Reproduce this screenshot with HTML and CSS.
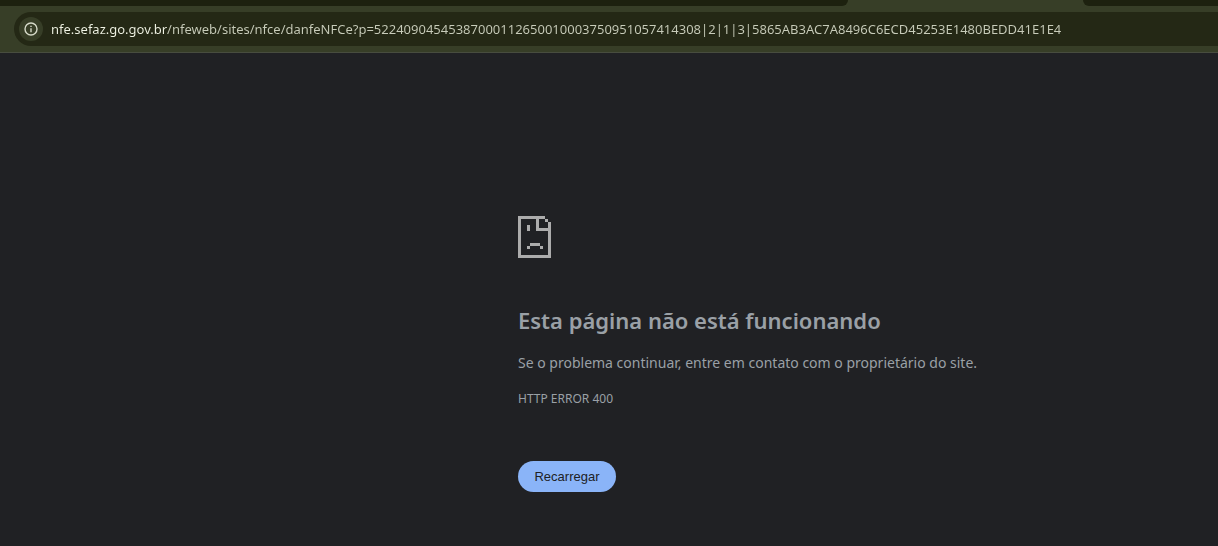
FILE: index.html
```html
<!DOCTYPE html>
<html lang="pt-BR">
<head>
    <meta charset="UTF-8">
    <meta name="viewport" content="width=device-width, initial-scale=1.0">
    <title>nfe.sefaz.go.gov.br</title>
    <link rel="stylesheet" href="styles.css">
</head>
<body>
    <header class="browser">
        <div class="tab-strip">
            <div class="tab-left"></div>
            <div class="tab-active"></div>
            <div class="tab-right"></div>
        </div>
        <div class="toolbar">
            <form class="address-bar">
                <button type="button" class="site-info" aria-label="Ver informações do site">
                    <svg width="14" height="14" viewBox="0 0 14 14">
                        <circle cx="7" cy="7" r="6" fill="none" stroke="#d5d9c8" stroke-width="1.4"/>
                        <path d="M6.3 6.3h1.4v4H6.3zM6.3 3.7h1.4v1.4H6.3z" fill="#d5d9c8"/>
                    </svg>
                </button>
                <input type="text" class="url" aria-label="Barra de endereço" spellcheck="false" value="nfe.sefaz.go.gov.br/nfeweb/sites/nfce/danfeNFCe?p=52240904545387000112650010003750951057414308|2|1|3|5865AB3AC7A8496C6ECD45253E1480BEDD41E1E4">
            </form>
        </div>
    </header>
    <main class="error-page">
        <svg class="sad-file" width="33" height="42" viewBox="0 0 33 42" shape-rendering="crispEdges">
            <path fill="#acacac" d="M0 0h27v3H21v9h12v3H18V3H3v36h27V15h3v27H0zM27 3h3v3h-3zM30 6h3v9h-3zM9 9h3v6H9zM12 27h10v3H12zM9 30h3v3H9zM22 30h3v3h-3z"/>
        </svg>
        <h1>Esta página não está funcionando</h1>
        <p class="message">Se o problema continuar, entre em contato com o proprietário do site.</p>
        <p class="error-code">HTTP ERROR 400</p>
        <button type="button" class="reload">Recarregar</button>
    </main>
</body>
</html>
```
FILE: styles.css
```css
* {
    box-sizing: border-box;
}

body {
    margin: 0;
    background-color: #202124;
    color: #9aa0a6;
    font-family: "Noto Sans", "Open Sans", sans-serif;
}

/* browser bars */
.browser {
    background-color: #373e27;
    border-bottom: 1px solid #484d3f;
}

.tab-strip {
    display: flex;
    height: 6px;
}

.tab-left,
.tab-right {
    background-color: #1d210f;
}

.tab-left {
    flex: 848;
    border-bottom-right-radius: 8px;
}

.tab-active {
    flex: 235;
}

.tab-right {
    flex: 135;
    border-bottom-left-radius: 8px;
}

.toolbar {
    padding: 6px 0 6px 14px;
}

.address-bar {
    display: flex;
    align-items: center;
    gap: 8px;
    height: 34px;
    padding-left: 5px;
    background-color: #242815;
    border-radius: 17px 0 0 17px;
}

.site-info {
    display: flex;
    align-items: center;
    justify-content: center;
    width: 24px;
    height: 24px;
    padding: 0;
    border: none;
    border-radius: 50%;
    background-color: #373e27;
}

.url {
    flex: 1;
    height: 24px;
    padding: 0;
    border: none;
    outline: none;
    color: #c8ccba;
    /* the host name is brighter than the rest of the address */
    background: linear-gradient(to right, #f0f3e4 116px, #c8ccba 116px);
    -webkit-background-clip: text;
    background-clip: text;
    -webkit-text-fill-color: transparent;
    font-family: inherit;
    font-size: 13px;
}

/* error page */
.error-page {
    width: 100%;
    max-width: 700px;
    margin-left: auto;
    padding-top: 163px;
}

.sad-file {
    display: block;
}

h1 {
    margin: 46px 0 16px;
    font-size: 22px;
    font-weight: 600;
    line-height: 32px;
}

p {
    margin: 0;
}

.message {
    font-size: 14px;
    line-height: 22px;
}

.error-code {
    margin-top: 16px;
    font-size: 12px;
    line-height: 18px;
}

.reload {
    min-width: 98px;
    height: 31px;
    margin-top: 53px;
    padding: 0 16px;
    border: none;
    border-radius: 16px;
    background-color: #8ab4f8;
    color: #202124;
    font-family: "Liberation Sans", Arial, sans-serif;
    font-size: 13px;
    cursor: pointer;
}
```
